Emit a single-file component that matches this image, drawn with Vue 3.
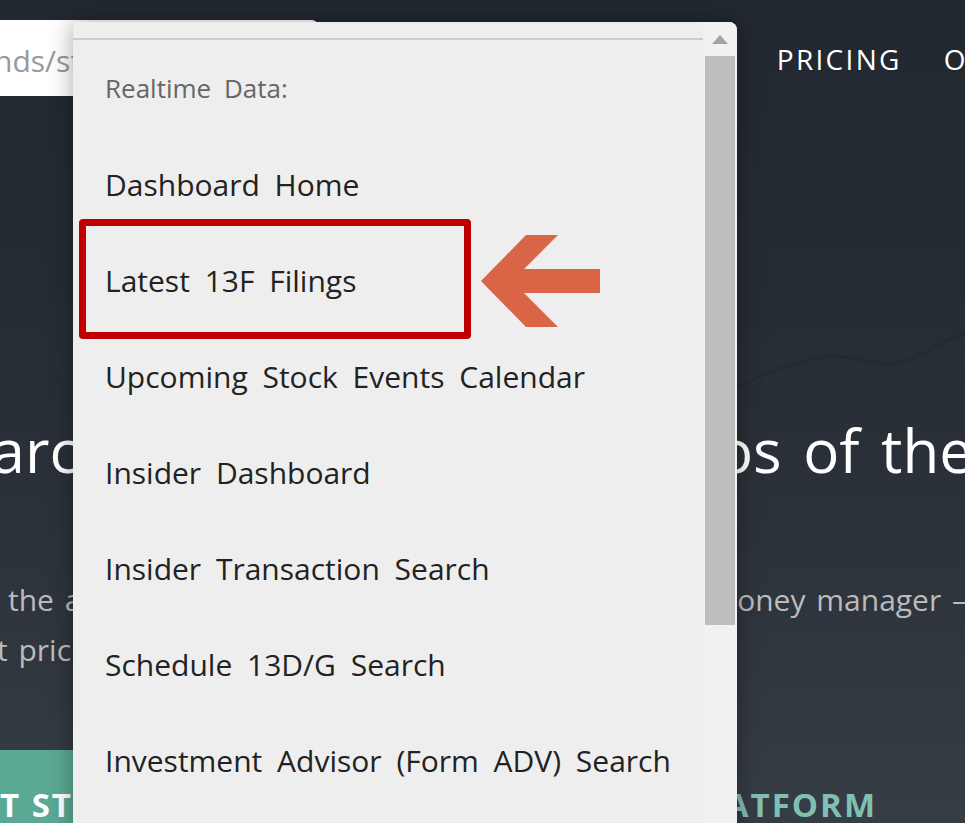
<script setup>
const menuItems = [
  "Dashboard Home",
  "Latest 13F Filings",
  "Upcoming Stock Events Calendar",
  "Insider Dashboard",
  "Insider Transaction Search",
  "Schedule 13D/G Search",
  "Investment Advisor (Form ADV) Search",
];
</script>

<template>
  <div class="page">
    <svg class="hero-art" width="965" height="823" viewBox="0 0 965 823">
      <path d="M0 320 C120 280 240 300 380 320 S 700 350 965 300 L965 370 C700 400 400 380 0 370 Z" fill="#fff" opacity="0.008" />
      <path d="M737 386 C770 372 800 358 835 356 C860 358 880 366 900 363 C920 358 940 342 965 334" fill="none" stroke="#000" stroke-width="3" opacity="0.08" />
    </svg>

    <header class="topbar">
      <div class="search">
        <span class="search-text">nds/stocks</span>
      </div>
      <nav class="nav">
        <a>PRICING</a>
        <a>OUR DATA</a>
      </nav>
    </header>

    <section class="hero">
      <h1 class="headline"><span>Search</span><span>Portfolios of the</span></h1>
      <div class="sub">
        <p class="sub-line first"><span>the a</span><span>oney manager –</span></p>
        <p class="sub-line second">t pric</p>
      </div>
      <div class="cta">
        <a class="cta-primary">T ST</a>
        <a class="cta-secondary">ATFORM</a>
      </div>
    </section>

    <div class="dropdown">
      <div class="menu">
        <div class="menu-rule"></div>
        <div class="menu-title">Realtime Data:</div>
        <ul class="menu-list">
          <li v-for="item in menuItems" :key="item">{{ item }}</li>
        </ul>
      </div>
      <div class="scrollbar">
        <span class="scroll-up"></span>
        <div class="scroll-thumb"></div>
      </div>
    </div>

    <div class="callout-box"></div>
    <svg class="callout-arrow" width="120" height="92" viewBox="0 0 120 92">
      <polygon points="0,46 45,0 77,0 43,34 119,34 119,58 43,58 77,92 45,92" fill="#da6446" />
    </svg>
  </div>
</template>

<style>
html,
body {
  margin: 0;
  overflow: hidden;
}
</style>

<style scoped>
.page {
  position: relative;
  width: 965px;
  height: 823px;
  overflow: hidden;
  background: linear-gradient(180deg, #22282f 0%, #262c33 40%, #2f353d 75%, #363d45 100%);
  font-family: "Open Sans", "Noto Sans", sans-serif;
}

.hero-art {
  position: absolute;
  left: 0;
  top: 0;
}

.topbar {
  position: relative;
  display: flex;
  justify-content: space-between;
  height: 120px;
  padding-top: 20px;
  box-sizing: border-box;
}

.search {
  width: 318px;
  height: 76px;
  background: #fff;
  border-radius: 0 6px 6px 0;
  overflow: hidden;
  white-space: nowrap;
  line-height: 82px;
  font-size: 30px;
  color: #999;
}

.search-text {
  margin-left: -6px;
}

.nav {
  display: flex;
  gap: 42px;
  margin-right: -135px;
  padding-top: 19px;
  font-size: 28px;
  line-height: 40px;
  letter-spacing: 2.3px;
  color: #fff;
}

.hero {
  position: relative;
  display: flex;
  flex-direction: column;
}

.headline {
  display: flex;
  justify-content: space-between;
  margin: 288px -8px 0 -75px;
  font-size: 60px;
  line-height: 84px;
  font-weight: 400;
  color: #fff;
  word-spacing: 6px;
  white-space: nowrap;
}

.sub {
  margin-top: 83px;
  font-size: 30px;
  line-height: 50px;
  color: #bbb;
  word-spacing: 3px;
  white-space: nowrap;
}

.sub-line {
  margin: 0;
}

.first {
  display: flex;
  justify-content: space-between;
  margin-left: 8px;
  margin-right: -2px;
}

.second {
  margin-left: -3px;
}

.cta {
  display: flex;
  justify-content: space-between;
  height: 73px;
  margin-top: 75px;
  font-size: 33px;
  font-weight: 700;
  letter-spacing: 2px;
  line-height: 110px;
  white-space: nowrap;
}

.cta-primary {
  width: 140px;
  background: #5aa994;
  color: #fff;
}

.cta-secondary {
  margin-right: 88px;
  color: #80c0b3;
}

.dropdown {
  position: absolute;
  left: 73px;
  top: 22px;
  display: flex;
  width: 664px;
  height: 830px;
  background: #eee;
  border-radius: 0 8px 0 0;
  overflow: hidden;
  box-shadow: 0 0 24px rgba(0, 0, 0, 0.35);
}

.menu {
  flex: 1;
  min-width: 0;
  padding-top: 16px;
  color: #222;
}

.menu-rule {
  height: 2px;
  background: #ccc;
}

.menu-title {
  margin-top: 26px;
  padding-left: 32px;
  font-size: 26px;
  line-height: 44px;
  color: #666;
  word-spacing: 6px;
}

.menu-list {
  margin: 27px 0 0;
  padding: 0 0 0 32px;
  list-style: none;
  font-size: 30px;
  line-height: 96px;
  word-spacing: 7px;
  white-space: nowrap;
}

.scrollbar {
  position: relative;
  flex: none;
  box-sizing: border-box;
  width: 34px;
  padding: 34px 2px 0;
  background: #f1f1f1;
}

.scroll-up {
  position: absolute;
  left: 9px;
  top: 13px;
  border-left: 8px solid transparent;
  border-right: 8px solid transparent;
  border-bottom: 9px solid #a3a3a3;
}

.scroll-thumb {
  height: 569px;
  background: #bebebe;
}

.callout-box {
  position: absolute;
  left: 79px;
  top: 219px;
  width: 392px;
  height: 120px;
  box-sizing: border-box;
  border: 7px solid #c00000;
  border-radius: 4px;
}

.callout-arrow {
  position: absolute;
  left: 481px;
  top: 235px;
}
</style>
